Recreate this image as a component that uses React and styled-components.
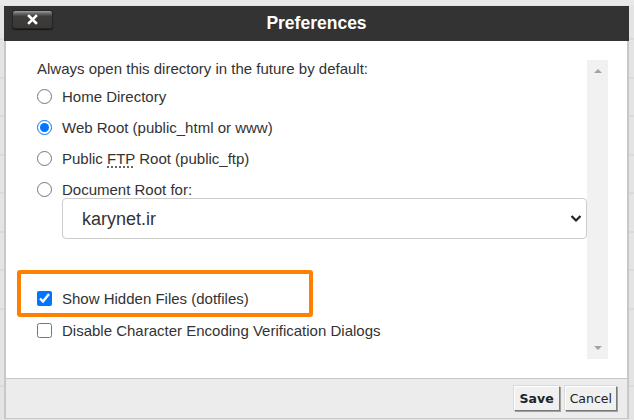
import React from 'react';
import styled, { createGlobalStyle } from 'styled-components';

const GlobalStyle = createGlobalStyle`
    html, body {
        margin: 0;
        padding: 0;
    }
    body {
        font-family: "Liberation Sans", Arial, sans-serif;
        color: #333333;
    }
`;

const Page = styled.div`
    position: relative;
    width: 634px;
    height: 420px;
    overflow: hidden;
    background-color: #e4e4e4;
    background-image:
        linear-gradient(#e9e9e9 0, #e9e9e9 5px, transparent 5px),
        repeating-linear-gradient(
            180deg,
            transparent 0,
            transparent 37.5px,
            #d0d0d0 37.5px,
            #d0d0d0 38.5px
        );
    background-position: 0 0, 0 1.5px;
`;

const Dialog = styled.div`
    position: absolute;
    left: 4px;
    top: 6px;
    width: 625px;
    height: 413px;
    display: flex;
    flex-direction: column;
    background: #ffffff;
`;

const Header = styled.div`
    height: 35px;
    flex: none;
    background: #333333;
    display: grid;
    grid-template-columns: 1fr auto 1fr;
    align-items: start;
`;

const CloseButton = styled.button`
    justify-self: start;
    margin: 4px 0 0 8px;
    width: 41px;
    height: 19px;
    padding: 0;
    border: 1px solid #262424;
    border-radius: 3px;
    background: linear-gradient(#a0a0a0 0, #6a6868 14%, #3e3b3b 32%, #3a3737 100%);
    box-shadow: 0 1px 1px rgba(0, 0, 0, .6);
    display: flex;
    justify-content: center;
    align-items: center;
`;

const Title = styled.h2`
    margin: 0;
    font-size: 17.5px;
    font-weight: bold;
    color: #ffffff;
    line-height: 35px;
`;

const Body = styled.div`
    flex: 1;
    display: flex;
    padding: 19px 19px 19px 0;
    border-left: 2px solid #c8c8c8;
    border-right: 2px solid #c8c8c8;
    min-height: 0;
`;

const Content = styled.div`
    flex: 1;
    padding-left: 31px;
    display: flex;
    flex-direction: column;
    font-size: 15px;
    line-height: 17px;
`;

const Lead = styled.p`
    margin: 0 0 10px;
`;

const OptionGroup = styled.div`
    display: flex;
    flex-direction: column;
    gap: 13px;
`;

const Option = styled.label`
    display: flex;
    align-items: center;
    height: 18px;
    gap: 10px;
    white-space: nowrap;
`;

const Radio = styled.input.attrs({ type: 'radio' })`
    width: 15px;
    height: 15px;
    margin: 0;
    accent-color: #0075ff;
`;

const Checkbox = styled.input.attrs({ type: 'checkbox' })`
    width: 15px;
    height: 15px;
    margin: 0;
    accent-color: #0075ff;
`;

const Abbr = styled.abbr`
    text-decoration: underline dotted;
    text-underline-offset: 3px;
`;

const SelectWrap = styled.div`
    position: relative;
    margin-left: 25px;
    height: 41px;
`;

const Select = styled.select`
    appearance: none;
    width: 100%;
    height: 100%;
    box-sizing: border-box;
    border: 1px solid #cccccc;
    border-radius: 4px;
    background: #ffffff;
    padding: 0 30px 0 19px;
    font-family: "Liberation Sans", Arial, sans-serif;
    font-size: 18px;
    color: #333333;
`;

const Chevron = styled.svg`
    position: absolute;
    right: 5px;
    top: 16px;
    pointer-events: none;
`;

const Highlight = styled.div`
    position: relative;
    margin-top: 50px;

    &::before {
        content: '';
        position: absolute;
        left: -20px;
        top: -19px;
        width: 296px;
        height: 47px;
        box-sizing: border-box;
        border: 4px solid #ff8000;
        border-radius: 3px;
    }
`;

const CheckRow = styled(Option)`
    margin-top: 14px;
`;

const Scrollbar = styled.div`
    width: 21px;
    flex: none;
    background: #f1f1f1;
    display: flex;
    flex-direction: column;
    justify-content: space-between;
    align-items: center;
    padding: 9px 0;
    box-sizing: border-box;
`;

const Arrow = styled.span`
    width: 0;
    height: 0;
    border-left: 4px solid transparent;
    border-right: 4px solid transparent;
    ${({ down }) => down
        ? 'border-top: 4px solid #a3a3a3;'
        : 'border-bottom: 4px solid #a3a3a3;'}
`;

const Footer = styled.div`
    height: 41px;
    flex: none;
    box-sizing: border-box;
    background: #ececec;
    border: 2px solid #c8c8c8;
    border-top-width: 1px;
    border-bottom-width: 1px;
    display: flex;
    justify-content: flex-end;
    align-items: flex-start;
    gap: 5px;
    padding: 7px 10px 0 0;
`;

const Button = styled.button`
    height: 25px;
    padding: 0 ${({ primary }) => (primary ? 5 : 4)}px;
    background: #f0f0f0;
    border: 1px solid;
    border-color: #ffffff #7a7a7a #7a7a7a #ffffff;
    box-shadow: 1px 1px 0 #a0a0a0, -1px -1px 0 #dadada;
    font-family: "DejaVu Sans", Verdana, sans-serif;
    font-size: 12.5px;
    font-weight: ${({ primary }) => (primary ? 'bold' : 'normal')};
    color: #222222;
`;

export default function App() {
    return (
        <>
            <GlobalStyle />
            <Page>
                <Dialog>
                    <Header>
                        <CloseButton aria-label='Close'>
                            <svg width='11' height='11' viewBox='0 0 11 11'>
                                <path d='M2 2 L9 9 M9 2 L2 9' stroke='#fff' strokeWidth='2.6' strokeLinecap='square' />
                            </svg>
                        </CloseButton>
                        <Title>Preferences</Title>
                        <span />
                    </Header>
                    <Body>
                        <Content>
                            <Lead>Always open this directory in the future by default:</Lead>
                            <OptionGroup>
                                <Option><Radio name='dir' />Home Directory</Option>
                                <Option><Radio name='dir' defaultChecked />Web Root (public_html or www)</Option>
                                <Option><Radio name='dir' /><span>Public <Abbr title='File Transfer Protocol'>FTP</Abbr> Root (public_ftp)</span></Option>
                                <Option><Radio name='dir' />Document Root for:</Option>
                            </OptionGroup>
                            <SelectWrap>
                                <Select defaultValue='karynet.ir'>
                                    <option value='karynet.ir'>karynet.ir</option>
                                </Select>
                                <Chevron width='12' height='9' viewBox='0 0 12 9'>
                                    <path d='M1.5 2 L6 6.5 L10.5 2' fill='none' stroke='#222' strokeWidth='2.2' />
                                </Chevron>
                            </SelectWrap>
                            <Highlight>
                                <Option><Checkbox defaultChecked />Show Hidden Files (dotfiles)</Option>
                            </Highlight>
                            <CheckRow><Checkbox />Disable Character Encoding Verification Dialogs</CheckRow>
                        </Content>
                        <Scrollbar>
                            <Arrow />
                            <Arrow down />
                        </Scrollbar>
                    </Body>
                    <Footer>
                        <Button primary>Save</Button>
                        <Button>Cancel</Button>
                    </Footer>
                </Dialog>
            </Page>
        </>
    );
}
